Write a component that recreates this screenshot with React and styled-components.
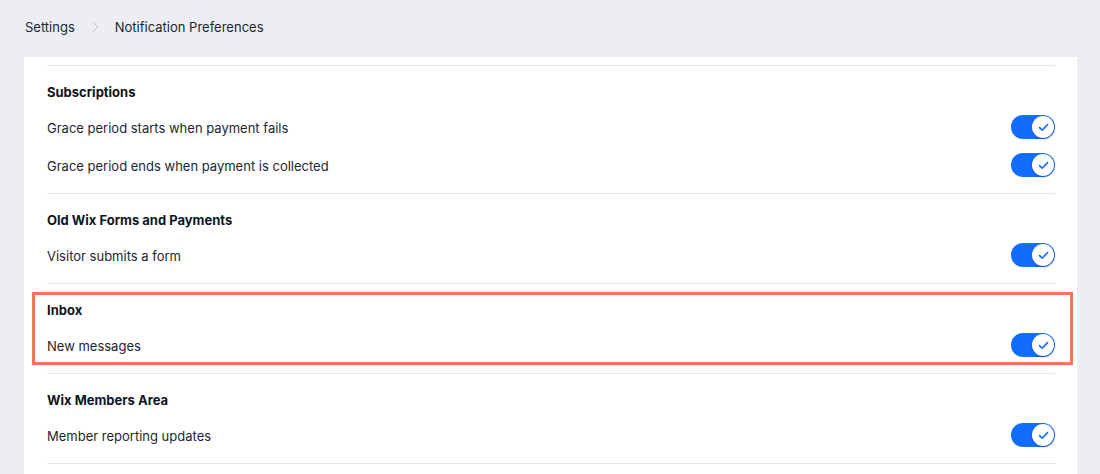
import React from 'react'
import styled, { createGlobalStyle } from 'styled-components'

const GlobalStyle = createGlobalStyle`
  html, body {
    margin: 0;
    padding: 0;
    background: #eceef4;
    font-family: Inter, "Noto Sans", sans-serif;
    color: #0d1b2a;
  }
`

const Page = styled.div`
  width: 1100px;
  height: 474px;
  overflow: hidden;
  background: #eceef4;
`

const Breadcrumbs = styled.nav`
  height: 57px;
  display: flex;
  align-items: center;
  gap: 13px;
  padding: 0 0 4px 25px;
  box-sizing: border-box;
  font-size: 13px;
  color: #1b2633;
`

const Chevron = styled.svg`
  width: 10px;
  height: 12px;
  color: #c3c8d2;
  margin: 0 2px;
`

const Card = styled.main`
  margin: 0 23px 0 24px;
  background: #fff;
  padding: 8px 22px 0 23px;
  min-height: 420px;
`

const Section = styled.section`
  position: relative;
  border-top: 1px solid #e3e7ee;
  padding: 16px 0 9px;
`

const Highlight = styled.div`
  position: absolute;
  top: 8px;
  bottom: 8px;
  left: -15px;
  right: -18px;
  border: 3px solid #fa7458;
  pointer-events: none;
`

const Title = styled.h3`
  margin: 0 0 6px;
  font-size: 13px;
  line-height: 20px;
  font-weight: 700;
  color: #0d1523;
`

const Row = styled.div`
  height: 38px;
  display: flex;
  align-items: center;
  justify-content: space-between;
  font-size: 13px;
  color: #1b2633;
`

const Label = styled.span`
  padding-top: 2px;
`

const Track = styled.span`
  position: relative;
  width: 44px;
  height: 24px;
  border-radius: 12px;
  background: ${p => (p.$on ? '#116dff' : '#cfd5dd')};
  display: flex;
  align-items: center;
  justify-content: ${p => (p.$on ? 'flex-end' : 'flex-start')};
`

const Knob = styled.span`
  width: 22px;
  height: 22px;
  border-radius: 50%;
  background: #fff;
  margin: 0 1px;
  box-shadow: 0 1px 2px rgba(10, 30, 70, 0.35);
  display: flex;
  align-items: center;
  justify-content: center;
  color: #116dff;
`

const Toggle = ({ on = true }) => (
  <Track $on={on}>
    <Knob>
      <svg width="11" height="9" viewBox="0 0 11 9" fill="none">
        <path d="M1.5 4.6 L4.2 7.2 L9.5 1.6" stroke="currentColor" strokeWidth="1.6" strokeLinecap="round" strokeLinejoin="round" />
      </svg>
    </Knob>
  </Track>
)

const sections = [
  { title: 'Subscriptions', rows: ['Grace period starts when payment fails', 'Grace period ends when payment is collected'] },
  { title: 'Old Wix Forms and Payments', rows: ['Visitor submits a form'] },
  { title: 'Inbox', rows: ['New messages'], highlighted: true },
  { title: 'Wix Members Area', rows: ['Member reporting updates'] },
]

const App = () => (
  <>
    <GlobalStyle />
    <Page>
      <Breadcrumbs>
        <span>Settings</span>
        <Chevron viewBox="0 0 10 12">
          <path d="M3 1 L7.5 6 L3 11" stroke="currentColor" strokeWidth="1" fill="none" />
        </Chevron>
        <span>Notification Preferences</span>
      </Breadcrumbs>
      <Card>
        {sections.map(s => (
          <Section key={s.title}>
            {s.highlighted && <Highlight />}
            <Title>{s.title}</Title>
            {s.rows.map(r => (
              <Row key={r}>
                <Label>{r}</Label>
                <Toggle on />
              </Row>
            ))}
          </Section>
        ))}
        <Section />
      </Card>
    </Page>
  </>
)

export default App
